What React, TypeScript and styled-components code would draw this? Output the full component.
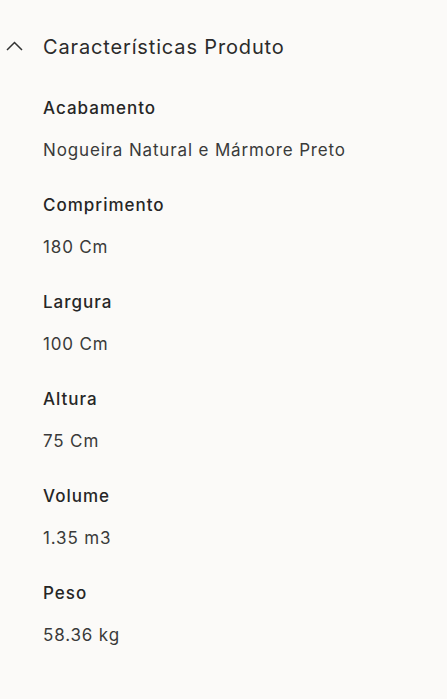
import React from "react";
import styled, { createGlobalStyle } from "styled-components";

const Global = createGlobalStyle`
  html, body { margin: 0; padding: 0; background: #fbfaf8; }
  body { font-family: "Inter", "Open Sans", sans-serif; color: #2f2f2f; }
`;

const Section = styled.section`
  padding: 0;
`;

const Header = styled.div`
  display: flex;
  align-items: center;
  height: 94px;
  padding-left: 6px;
`;

const Chevron = styled.svg`
  width: 17px;
  height: 10px;
  margin-right: 20px;
  margin-top: -2px;
`;

const Title = styled.h2`
  margin: 0;
  font-size: 20px;
  font-weight: 400;
  color: #2b2b2b;
  letter-spacing: 0.85px;
`;

const List = styled.dl`
  margin: 0;
  padding: 0 0 0 43px;
  display: flex;
  flex-direction: column;
`;

const Item = styled.div`
  display: flex;
  flex-direction: column;
  height: 97px;
`;

const Label = styled.dt`
  font-size: 17px;
  font-weight: 500;
  line-height: 28px;
  color: #262626;
  letter-spacing: 1px;
`;

const Value = styled.dd`
  margin: 14px 0 0 0;
  font-size: 17px;
  line-height: 28px;
  color: #3a3a3a;
  letter-spacing: 0.85px;
`;

const rows = [
  ["Acabamento", "Nogueira Natural e Mármore Preto"],
  ["Comprimento", "180 Cm"],
  ["Largura", "100 Cm"],
  ["Altura", "75 Cm"],
  ["Volume", "1.35 m3"],
  ["Peso", "58.36 kg"],
];

export default function App() {
  return (
    <>
      <Global />
      <Section>
        <Header>
          <Chevron viewBox="0 0 17 10" fill="none" stroke="#333" strokeWidth="1.5">
            <path d="M1 9 L8.5 1.5 L16 9" />
          </Chevron>
          <Title>Características Produto</Title>
        </Header>
        <List>
          {rows.map(([l, v]) => (
            <Item key={l}>
              <Label>{l}</Label>
              <Value>{v}</Value>
            </Item>
          ))}
        </List>
      </Section>
    </>
  );
}
